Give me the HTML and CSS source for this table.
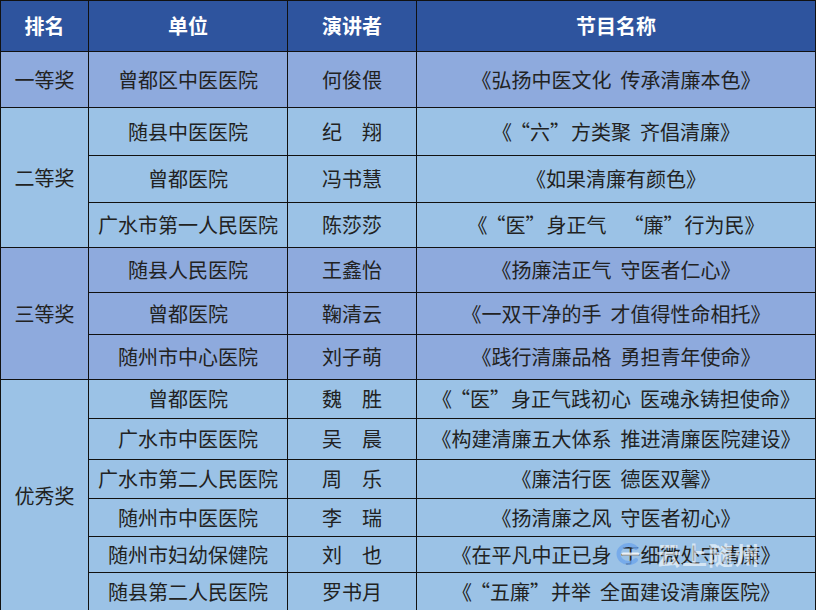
FILE: index.html
```html
<!DOCTYPE html>
<html lang="zh-CN">
<head>
<meta charset="utf-8">
<link rel="stylesheet" href="styles.css">
</head>
<body>
<div class="wrap">
<table class="awards">
  <colgroup>
    <col class="c1"><col class="c2"><col class="c3"><col class="c4">
  </colgroup>
  <thead>
    <tr class="h"><th>排名</th><th>单位</th><th>演讲者</th><th>节目名称</th></tr>
  </thead>
  <tbody>
    <tr class="p r1"><td>一等奖</td><td>曾都区中医医院</td><td>何俊偎</td><td>《弘扬中医文化&nbsp;&nbsp;传承清廉本色》</td></tr>

    <tr class="b r2"><td rowspan="3">二等奖</td><td>随县中医医院</td><td>纪　翔</td><td>《<span class="qo">“</span>六<span class="qc">”</span>方类聚&nbsp;&nbsp;齐倡清廉》</td></tr>
    <tr class="b r3"><td>曾都医院</td><td>冯书慧</td><td>《如果清廉有颜色》</td></tr>
    <tr class="b r4"><td>广水市第一人民医院</td><td>陈莎莎</td><td>《<span class="qo">“</span>医<span class="qc">”</span>身正气&nbsp;&nbsp;<span class="qo">“</span>廉<span class="qc">”</span>行为民》</td></tr>

    <tr class="p r5"><td rowspan="3">三等奖</td><td>随县人民医院</td><td>王鑫怡</td><td>《扬廉洁正气&nbsp;&nbsp;守医者仁心》</td></tr>
    <tr class="p r6"><td>曾都医院</td><td>鞠清云</td><td>《一双干净的手&nbsp;&nbsp;才值得性命相托》</td></tr>
    <tr class="p r7"><td>随州市中心医院</td><td>刘子萌</td><td>《践行清廉品格&nbsp;&nbsp;勇担青年使命》</td></tr>

    <tr class="b r8"><td rowspan="6">优秀奖</td><td>曾都医院</td><td>魏　胜</td><td>《<span class="qo">“</span>医<span class="qc">”</span>身正气践初心&nbsp;&nbsp;医魂永铸担使命》</td></tr>
    <tr class="b r9"><td>广水市中医医院</td><td>吴　晨</td><td>《构建清廉五大体系&nbsp;&nbsp;推进清廉医院建设》</td></tr>
    <tr class="b r10"><td>广水市第二人民医院</td><td>周　乐</td><td>《廉洁行医&nbsp;&nbsp;德医双馨》</td></tr>
    <tr class="b r11"><td>随州市中医医院</td><td>李　瑞</td><td>《扬清廉之风&nbsp;&nbsp;守医者初心》</td></tr>
    <tr class="b r12"><td>随州市妇幼保健院</td><td>刘　也</td><td>《在平凡中正已身&nbsp;&nbsp;于细微处守清廉》</td></tr>
    <tr class="b r13"><td>随县第二人民医院</td><td>罗书月</td><td>《<span class="qo">“</span>五廉<span class="qc">”</span>并举&nbsp;&nbsp;全面建设清廉医院》</td></tr>
  </tbody>
</table>
<div class="watermark">
  <svg class="wm-logo" width="28" height="24" viewBox="0 0 28 24">
    <path d="M22 6 A10 9 0 1 0 22 18" fill="none" stroke="rgba(110,165,235,0.8)" stroke-width="4" stroke-linecap="round"/>
    <path d="M9 12 H24" stroke="rgba(255,255,255,0.8)" stroke-width="3" stroke-linecap="round"/>
  </svg>
  <span class="wm-text">云上随州</span>
</div>
</div>
</body>
</html>
```
FILE: styles.css
```css
html, body {
  margin: 0;
  padding: 0;
  background: #ffffff;
}
.wrap {
  position: relative;
  width: 816px;
  height: 610px;
  overflow: hidden;
}
.awards {
  border-collapse: collapse;
  table-layout: fixed;
  width: 815px;
  font-family: "Noto Sans CJK SC", "Noto Sans", sans-serif;
  font-size: 20px;
  color: #222;
}
.c1 { width: 88px; }
.c2 { width: 199px; }
.c3 { width: 129px; }
.c4 { width: 399px; }
.awards th, .awards td {
  border: 1px solid #111;
  text-align: center;
  vertical-align: middle;
  padding: 0;
  line-height: 24px;
  white-space: nowrap;
}
.qo {
  padding-left: 0.4em;
}
.qc {
  padding-right: 0.05em;
}
.h th {
  background: #2e549e;
  color: #ffffff;
  font-weight: 700;
  font-size: 20px;
  height: 50px;
}
.p td { background: #8eaadd; }
.b td { background: #9bc2e6; }
.r1 td { height: 55px; }
.r2 td { height: 47px; }
.r3 td { height: 46px; }
.r4 td { height: 44px; }
.r5 td { height: 44px; }
.r6 td { height: 41px; }
.r7 td { height: 44px; }
.r8 td { height: 38px; }
.r9 td { height: 40px; }
.r10 td { height: 38px; }
.r11 td { height: 37px; }
.r12 td { height: 35px; }
.r13 td { height: 38px; }
.watermark {
  position: absolute;
  left: 614px;
  top: 536px;
  display: flex;
  align-items: center;
  gap: 14px;
}
.wm-text {
  font-family: "Noto Sans CJK SC", sans-serif;
  font-weight: 700;
  font-size: 25px;
  letter-spacing: 1px;
  color: rgba(255, 255, 255, 0.6);
}
```
